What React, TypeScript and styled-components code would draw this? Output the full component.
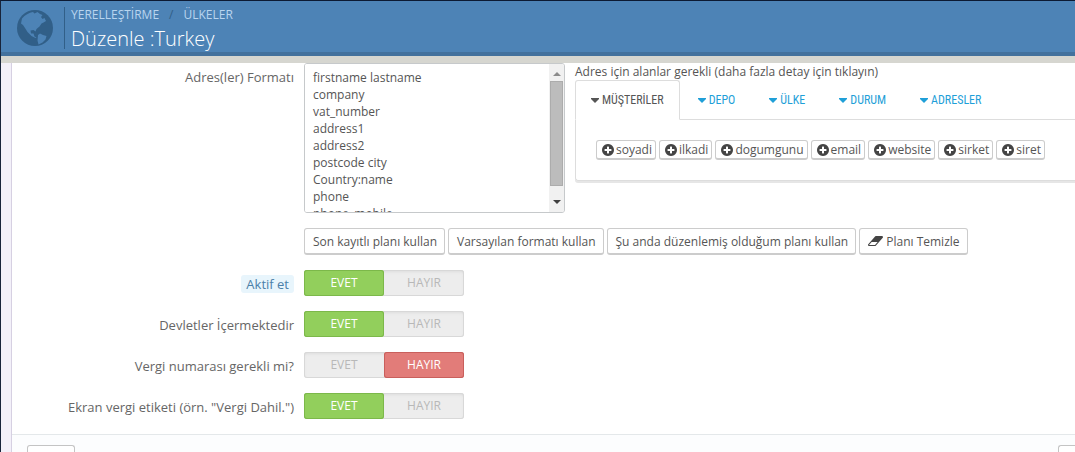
import React from "react";
import styled, { createGlobalStyle, css } from "styled-components";

const Global = createGlobalStyle`
  *, *::before, *::after { box-sizing: border-box; }
  html, body { margin: 0; }
  body {
    background: #f3f0f9;
    color: #555;
    font: 12px/17px "Open Sans", sans-serif;
  }
  button, textarea { font: inherit; color: inherit; }
`;

const Page = styled.div`
  min-height: 100vh;
  display: flex;
  flex-direction: column;
  border-left: 1px solid #18243a;
  border-top: 1px solid #0c1a33;
  overflow: hidden;
`;

const Header = styled.header`
  display: flex;
  align-items: flex-start;
  height: 55px;
  padding: 6px 15px 0;
  background: #4d83b6;
  border-bottom: 4px solid #43719d;
`;

const GlobeIcon = styled.svg`
  width: 38px;
  height: 38px;
  margin-top: 1px;
  fill: #315f88;
`;

const Titles = styled.div`
  margin-left: 10px;
  padding-left: 6px;
  height: 42px;
  border-left: 1px solid #315f88;
`;

const Crumbs = styled.nav`
  display: flex;
  gap: 10px;
  line-height: 16px;
  color: #315f88;
  a { color: #b9d5ef; text-decoration: none; }
`;

const Title = styled.h1`
  margin: 0;
  font-size: 20px;
  line-height: 32px;
  font-weight: 300;
  color: #fff;
`;

const Strip = styled.div`
  height: 7px;
  background: #d6d6d0;
`;

const Panel = styled.main`
  flex: 1;
  display: flex;
  flex-direction: column;
  margin-left: 10px;
  border-left: 1px solid #d6d0e2;
  background: #fff;
`;

const FormRow = styled.div`
  display: grid;
  grid-template-columns: 282px minmax(0, 1fr);
  column-gap: 10px;
  margin-bottom: 15px;
`;

const labelBase = css`
  justify-self: end;
  font-size: 13px;
  line-height: 18px;
  color: #666;
`;

const Label = styled.label`
  ${labelBase}
  margin-top: 5px;
`;

const GroupLabel = styled.span<{ $hint?: boolean }>`
  ${labelBase}
  align-self: center;
  margin-top: 2px;
  ${(p) =>
    p.$hint &&
    css`
      padding: 0 5px;
      border-radius: 3px;
      background: #e8f5fc;
      color: #4b7fa8;
    `}
`;

const FormatLayout = styled.div`
  display: grid;
  grid-template-columns: 261px minmax(0, 1fr);
  column-gap: 10px;
`;

const FormatBox = styled.div`
  display: flex;
  height: 150px;
  border: 1px solid #c6c9cb;
  border-radius: 3px;
  overflow: hidden;
`;

const FormatText = styled.textarea`
  flex: 1;
  min-width: 0;
  padding: 5px 8px 0;
  border: 0;
  outline: 0;
  resize: none;
  overflow: hidden;
  background: #fff;
  line-height: 17px;
`;

const ScrollTrack = styled.div`
  display: flex;
  flex-direction: column;
  align-items: center;
  width: 15px;
  padding: 8px 1px;
  background: #f1f1f1;
`;

const ScrollThumb = styled.div`
  width: 13px;
  height: 105px;
  margin: 5px 0 14px;
  background: #bcbcbc;
  border: 1px solid #acacac;
`;

const Arrow = styled.span<{ $up?: boolean }>`
  border: 4px solid transparent;
  ${(p) =>
    p.$up
      ? "border-top: 0; border-bottom-color: #8b8b8b;"
      : "border-bottom: 0; border-top-color: #404040;"}
`;

const Hint = styled.p`
  margin: 0;
`;

const TabList = styled.div`
  display: flex;
  gap: 2px;
  border-bottom: 1px solid #ddd;
`;

const Tab = styled.button<{ $active?: boolean }>`
  display: flex;
  align-items: center;
  gap: 3px;
  height: 40px;
  margin-bottom: -1px;
  padding: 0 15px;
  border: 1px solid transparent;
  border-radius: 3px 3px 0 0;
  background: transparent;
  color: #1f9fd8;
  font-family: "Ubuntu Condensed", "Roboto Condensed", "Open Sans Condensed", Lato, sans-serif;
  font-size: 12px;
  white-space: nowrap;
  ${(p) =>
    p.$active &&
    css`
      border-color: #ddd #ddd #fff;
      background: #fff;
      color: #555;
    `}
`;

const Caret = styled.svg`
  width: 8px;
  height: 5px;
  fill: currentColor;
`;

const TabPanel = styled.div`
  display: flex;
  flex-wrap: wrap;
  align-content: flex-start;
  gap: 3px;
  min-height: 61px;
  padding: 20px;
  border: 1px solid #ddd;
  border-width: 0 0 1px 1px;
  border-radius: 0 0 0 3px;
  box-shadow: 0 2px 0 #e6e6e6;
`;

const Button = styled.button<{ $small?: boolean }>`
  display: inline-flex;
  align-items: center;
  gap: ${(p) => (p.$small ? 2 : 3)}px;
  height: ${(p) => (p.$small ? 20 : 27)}px;
  padding: ${(p) => (p.$small ? "0 3px 0 5px" : "0 7px 0 8px")};
  border: 1px solid #ccc;
  border-bottom: 2px solid #ccc;
  border-radius: 3px;
  background: #fff;
  white-space: nowrap;
`;

const PlusIcon = styled.svg`
  width: 12px;
  height: 12px;
  fill: #444;
`;

const EraserIcon = styled.svg`
  width: 15px;
  height: 14px;
  fill: #444;
`;

const Actions = styled.div`
  display: flex;
  flex-wrap: wrap;
  gap: 3px;
  margin-top: 15px;
`;

const Switch = styled.div`
  display: flex;
  width: 160px;
  height: 26px;
  border-radius: 3px;
  background: #ededed;
  box-shadow: inset 0 0 0 1px #d8d8d8, inset 0 2px 3px #ddd;
`;

const Choice = styled.label<{ $tone: "green" | "red" }>`
  flex: 1;
  display: flex;
  justify-content: center;
  line-height: 25px;
  color: #b8b8b8;
  border-radius: 3px;
  cursor: pointer;
  input { appearance: none; margin: 0; width: 0; height: 0; }
  &:has(input:checked) {
    color: #fff;
    background: ${(p) => (p.$tone === "green" ? "#92cf5c" : "#e27c79")};
    box-shadow: inset 0 0 0 1px ${(p) => (p.$tone === "green" ? "#7cb84a" : "#c95f5c")};
  }
`;

const Footer = styled.footer`
  flex: 1;
  display: flex;
  justify-content: space-between;
  padding: 10px 0 0 15px;
  border-top: 1px solid #e4e8ea;
  background: #fcfdfe;
  overflow: hidden;
`;

const FooterButton = styled.button<{ $end?: boolean }>`
  flex: none;
  width: ${(p) => (p.$end ? 17 : 48)}px;
  padding: 0;
  border: 1px solid #c4c4c4;
  border-width: ${(p) => (p.$end ? "1px 0 0 1px" : "1px 1px 0")};
  border-radius: ${(p) => (p.$end ? "3px 0 0 0" : "3px 3px 0 0")};
  background: #fff;
`;

const PlusCircle = () => (
  <PlusIcon viewBox="128 128 1536 1536" aria-hidden="true">
    <path d="M1344 960v-128q0-26-19-45t-45-19h-256v-256q0-26-19-45t-45-19h-128q-26 0-45 19t-19 45v256h-256q-26 0-45 19t-19 45v128q0 26 19 45t45 19h256v256q0 26 19 45t45 19h128q26 0 45-19t19-45v-256h256q26 0 45-19t19-45zm320-64q0 209-103 385.5t-279.5 279.5-385.5 103-385.5-103-279.5-279.5-103-385.5 103-385.5 279.5-279.5 385.5-103 385.5 103 279.5 279.5 103 385.5z" />
  </PlusIcon>
);

const Eraser = () => (
  <EraserIcon viewBox="0 0 1920 1792" aria-hidden="true">
    <path d="M896 1408l336-384h-768l-336 384h768zm1013-1077q15 34 9.5 71.5t-30.5 65.5l-896 1024q-38 44-96 44h-768q-38 0-69.5-20.5t-47.5-54.5q-15-34-9.5-71.5t30.5-65.5l896-1024q38-44 96-44h768q38 0 69.5 20.5t47.5 54.5z" />
  </EraserIcon>
);

const tabs = ["MÜŞTERİLER", "DEPO", "ÜLKE", "DURUM", "ADRESLER"];
const fields = ["soyadi", "ilkadi", "dogumgunu", "email", "website", "sirket", "siret"];
const layout = [
  "firstname lastname", "company", "vat_number", "address1", "address2",
  "postcode city", "Country:name", "phone", "phone_mobile",
].join("\n");
const switches = [
  { name: "active", label: "Aktif et", on: true, hint: true },
  { name: "states", label: "Devletler İçermektedir", on: true },
  { name: "tax_number", label: "Vergi numarası gerekli mi?", on: false },
  { name: "tax_label", label: 'Ekran vergi etiketi (örn. "Vergi Dahil.")', on: true },
];

export default function App() {
  return (
    <Page lang="tr">
      <Global />
      <Header>
        <GlobeIcon viewBox="0 0 38 38" aria-hidden="true">
          <circle cx="19" cy="20" r="18" />
          <path
            fill="#4d83b6"
            d="M6 10.500C9 7 13 4.500 17 4l1.500 1.500 3-1.500 2.500 2 2.500 1-1.500 2 1.500 2 2-1 1.500 3-2.500 1.500-2 1-2 3-3 2.500-1 2.500-2-1.500-3 .5.5 3 2.500 0 1 3 2 1-1 .5-4-2-4-4-2.500-4-2-3-2-1.500zM22 27l2-1.500 3 1.500 3.500 1-1 3.500-3 3-4 2-1-4z"
          />
        </GlobeIcon>
        <Titles>
          <Crumbs>
            <a href="#localization">YERELLEŞTİRME</a>
            <span>/</span>
            <a href="#countries">ÜLKELER</a>
          </Crumbs>
          <Title>Düzenle :Turkey</Title>
        </Titles>
      </Header>
      <Strip />
      <Panel>
        <FormRow>
          <Label htmlFor="format">Adres(ler) Formatı</Label>
          <div>
            <FormatLayout>
              <FormatBox>
                <FormatText id="format" defaultValue={layout} />
                <ScrollTrack aria-hidden="true">
                  <Arrow $up />
                  <ScrollThumb />
                  <Arrow />
                </ScrollTrack>
              </FormatBox>
              <div>
                <Hint>Adres için alanlar gerekli (daha fazla detay için tıklayın)</Hint>
                <TabList role="tablist">
                  {tabs.map((t, i) => (
                    <Tab key={t} role="tab" aria-selected={i === 0} $active={i === 0}>
                      <Caret viewBox="0 0 8 5" aria-hidden="true">
                        <path d="M0 0h8v1L4 5 0 1z" />
                      </Caret>
                      {t}
                    </Tab>
                  ))}
                </TabList>
                <TabPanel role="tabpanel">
                  {fields.map((f) => (
                    <Button key={f} $small>
                      <PlusCircle />
                      {f}
                    </Button>
                  ))}
                </TabPanel>
              </div>
            </FormatLayout>
            <Actions>
              <Button>Son kayıtlı planı kullan</Button>
              <Button>Varsayılan formatı kullan</Button>
              <Button>Şu anda düzenlemiş olduğum planı kullan</Button>
              <Button>
                <Eraser />
                Planı Temizle
              </Button>
            </Actions>
          </div>
        </FormRow>
        {switches.map((s) => (
          <FormRow key={s.name}>
            <GroupLabel id={s.name} $hint={s.hint}>{s.label}</GroupLabel>
            <Switch role="radiogroup" aria-labelledby={s.name}>
              <Choice $tone="green">
                <input type="radio" name={s.name} defaultChecked={s.on} />
                EVET
              </Choice>
              <Choice $tone="red">
                <input type="radio" name={s.name} defaultChecked={!s.on} />
                HAYIR
              </Choice>
            </Switch>
          </FormRow>
        ))}
        <Footer>
          <FooterButton aria-label="İptal" />
          <FooterButton $end aria-label="Kaydet" />
        </Footer>
      </Panel>
    </Page>
  );
}
